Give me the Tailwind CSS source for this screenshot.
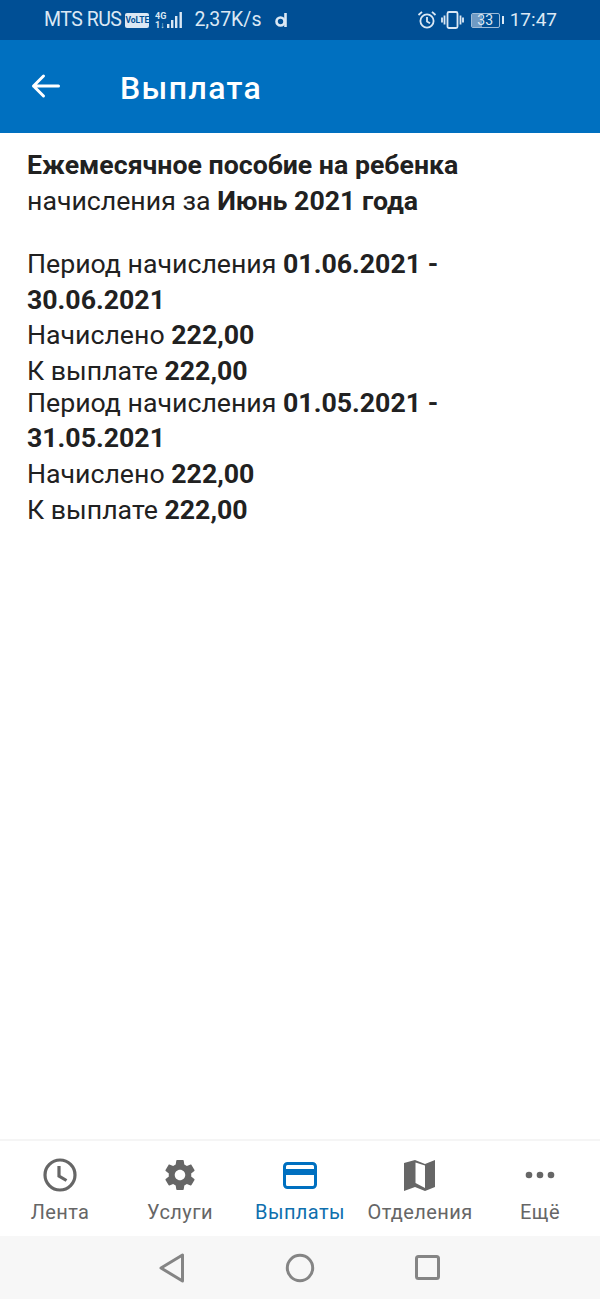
<!DOCTYPE html>
<html lang="ru">
<head>
    <meta charset="UTF-8">
    <meta name="viewport" content="width=device-width, initial-scale=1.0">
    <script src="https://cdn.jsdelivr.net/npm/@tailwindcss/browser@4"></script>
    <title>Выплата</title>
</head>
<body class="bg-white font-['Roboto',sans-serif]">
    <div class="w-[600px] h-[1299px] flex flex-col overflow-hidden">
        <!-- status bar -->
        <div class="h-10 bg-[#004f95] text-[#dbe8f4] flex items-center justify-between text-[19.5px] pl-[44px] pr-[43px] shrink-0">
            <div class="flex items-center">
                <span class="tracking-[-0.5px]">MTS RUS</span>
                <span class="ml-[4px] w-[24px] h-[15px] bg-[#dbe8f4] text-[#004f95] rounded-[2px] text-[8.500px] font-bold flex items-center justify-center">VoLTE</span>
                <svg class="ml-[6px]" width="30" height="20" viewBox="0 0 30 20" fill="#dbe8f4">
                    <text x="0" y="8.500" font-size="9" font-weight="700" font-family="Roboto">4G</text>
                    <text x="0" y="18" font-size="9" font-weight="700" font-family="Roboto">1↓</text>
                    <rect x="12" y="14" width="2.400" height="4"/><rect x="16" y="10" width="2.400" height="8"/><rect x="20" y="6" width="2.400" height="12"/><rect x="24.500" y="2" width="2.400" height="16"/>
                </svg>
                <span class="ml-[9px]">2,37K/s</span>
                <svg class="ml-[13px]" width="14" height="16" viewBox="0 0 14 16" fill="none" stroke="#dbe8f4" stroke-width="2.600">
                    <circle cx="6.500" cy="9.500" r="4"/><path d="M11.500 1v14"/>
                </svg>
            </div>
            <div class="flex items-center">
                <svg width="20" height="20" viewBox="0 0 20 20" fill="none" stroke="#dbe8f4" stroke-width="1.800">
                    <circle cx="10" cy="11" r="6.600"/><path d="M10 7v4.400l3 1.800M1.500 5 5 1.800M18.500 5 15 1.800"/>
                </svg>
                <svg class="ml-[4px]" width="23" height="20" viewBox="0 0 23 20" fill="none" stroke="#dbe8f4" stroke-width="1.800">
                    <rect x="6.500" y="2" width="10" height="16" rx="1.500"/><path d="M3.500 5.500v9M1 7.500v5M19.500 5.500v9M22 7.500v5"/>
                </svg>
                <div class="ml-[7px] relative w-[29px] h-[15px] rounded-[2px] border border-[#9fbcd8] overflow-hidden flex items-center justify-center text-[14px] leading-none">
                    <div class="absolute left-0 top-0 bottom-0 w-[10px] bg-[#9fbcd8]/70"></div>
                    <span class="relative">33</span>
                </div>
                <div class="ml-[2px] w-[2px] h-[8px] bg-[#dbe8f4]"></div>
                <span class="ml-[6px] text-[19px]">17:47</span>
            </div>
        </div>

        <!-- app bar -->
        <div class="h-[93px] bg-[#0070c0] text-white flex items-center shrink-0">
            <svg class="ml-[31px] mb-[2px]" width="30" height="26" viewBox="0 0 30 26" fill="none" stroke="white" stroke-width="3" stroke-linecap="round" stroke-linejoin="round">
                <path d="M2.500 13h25M12.500 3 2.500 13l10 10"/>
            </svg>
            <h1 class="ml-[59px] text-[32px] font-medium tracking-[1.400px] leading-none pt-[2px]">Выплата</h1>
        </div>

        <!-- payment details -->
        <div class="flex-1 px-[27px] pt-[15px] text-[26.700px] leading-[35.600px] text-[#212121]">
            <p class="font-bold">Ежемесячное пособие на ребенка</p>
            <p>начисления за <b>Июнь 2021 года</b></p>
            <div class="mt-[28px]">
                <p>Период начисления <b>01.06.2021 - 30.06.2021</b></p>
                <p>Начислено <b>222,00</b></p>
                <p>К выплате <b>222,00</b></p>
            </div>
            <div class="-mt-[3.700px]">
                <p>Период начисления <b>01.05.2021 - 31.05.2021</b></p>
                <p>Начислено <b>222,00</b></p>
                <p>К выплате <b>222,00</b></p>
            </div>
        </div>

        <!-- bottom tabs -->
        <nav class="h-[97px] border-t-2 border-[#f5f5f5] flex shrink-0 text-[#666666] text-[20px] tracking-[0.4px]">
            <a class="w-[120px] flex flex-col items-center">
                <svg class="mt-[16px]" width="36" height="36" viewBox="0 0 36 36" fill="none" stroke="#666666" stroke-width="3.200">
                    <circle cx="18" cy="18" r="15"/><path d="M17 9v10l7.500 4.500"/>
                </svg>
                <span class="mt-[8px] leading-[22px]">Лента</span>
            </a>
            <a class="w-[120px] flex flex-col items-center">
                <svg class="mt-[16px]" width="36" height="36" viewBox="0 0 24 24" fill="#666666">
                    <path d="M19.430 12.980c.04-.32.07-.64.07-.98s-.03-.66-.07-.98l2.110-1.650c.19-.15.24-.42.12-.64l-2-3.460c-.12-.22-.39-.3-.61-.22l-2.490 1c-.52-.4-1.080-.73-1.690-.98l-.38-2.650C14.460 2.180 14.250 2 14 2h-4c-.25 0-.46.18-.49.42l-.38 2.650c-.61.25-1.170.59-1.690.98l-2.490-1c-.23-.09-.49 0-.61.22l-2 3.460c-.13.22-.07.49.12.64l2.110 1.650c-.04.32-.07.65-.07.98s.03.66.07.98l-2.110 1.650c-.19.15-.24.42-.12.64l2 3.460c.12.22.39.3.61.22l2.490-1c.52.4 1.080.73 1.690.98l.38 2.650c.03.24.24.42.49.42h4c.25 0 .46-.18.49-.42l.38-2.650c.61-.25 1.170-.59 1.690-.98l2.490 1c.23.09.49 0 .61-.22l2-3.460c.12-.22.07-.49-.12-.64l-2.110-1.650zM12 15.500c-1.930 0-3.500-1.570-3.500-3.500s1.570-3.500 3.500-3.500 3.500 1.570 3.500 3.500-1.570 3.500-3.500 3.500z"/>
                </svg>
                <span class="mt-[8px] leading-[22px]">Услуги</span>
            </a>
            <a class="w-[120px] flex flex-col items-center text-[#0f6fae]">
                <!-- card with a stripe below its top edge -->
                <svg class="mt-[16px]" width="36" height="36" viewBox="0 0 36 36" fill="none">
                    <rect x="2.500" y="6.500" width="31" height="24" rx="3" stroke="#0070c0" stroke-width="3"/>
                    <rect x="2.500" y="12" width="31" height="6" fill="#0070c0"/>
                </svg>
                <span class="mt-[8px] leading-[22px]">Выплаты</span>
            </a>
            <a class="w-[120px] flex flex-col items-center">
                <svg class="mt-[16px]" width="36" height="36" viewBox="0 0 36 36" fill="#666666">
                    <path fill-rule="evenodd" d="M2 6 13 3l10 4 10-4V30L23 34l-10-4L2 34zM13.500 5.500v20.500l9.500 5V8.500z"/>
                </svg>
                <span class="mt-[8px] leading-[22px]">Отделения</span>
            </a>
            <a class="w-[120px] flex flex-col items-center">
                <svg class="mt-[16px]" width="36" height="36" viewBox="0 0 36 36" fill="#666666">
                    <circle cx="7" cy="18" r="3.300"/><circle cx="18" cy="18" r="3.300"/><circle cx="29" cy="18" r="3.300"/>
                </svg>
                <span class="mt-[8px] leading-[22px]">Ещё</span>
            </a>
        </nav>

        <!-- system navigation -->
        <div class="h-[63px] bg-[#f7f7f7] flex items-center justify-center gap-[99px] shrink-0">
            <svg width="28" height="32" viewBox="0 0 28 32" fill="none" stroke="#858585" stroke-width="3" stroke-linejoin="round">
                <path d="M24.500 3v26L3 16z"/>
            </svg>
            <svg width="30" height="30" viewBox="0 0 30 30" fill="none" stroke="#858585" stroke-width="3"><circle cx="15" cy="15" r="12.700"/></svg>
            <svg width="28" height="28" viewBox="0 0 28 28" fill="none" stroke="#858585" stroke-width="3"><rect x="2.500" y="2.500" width="22" height="22" rx="2"/></svg>
        </div>
    </div>
</body>
</html>
